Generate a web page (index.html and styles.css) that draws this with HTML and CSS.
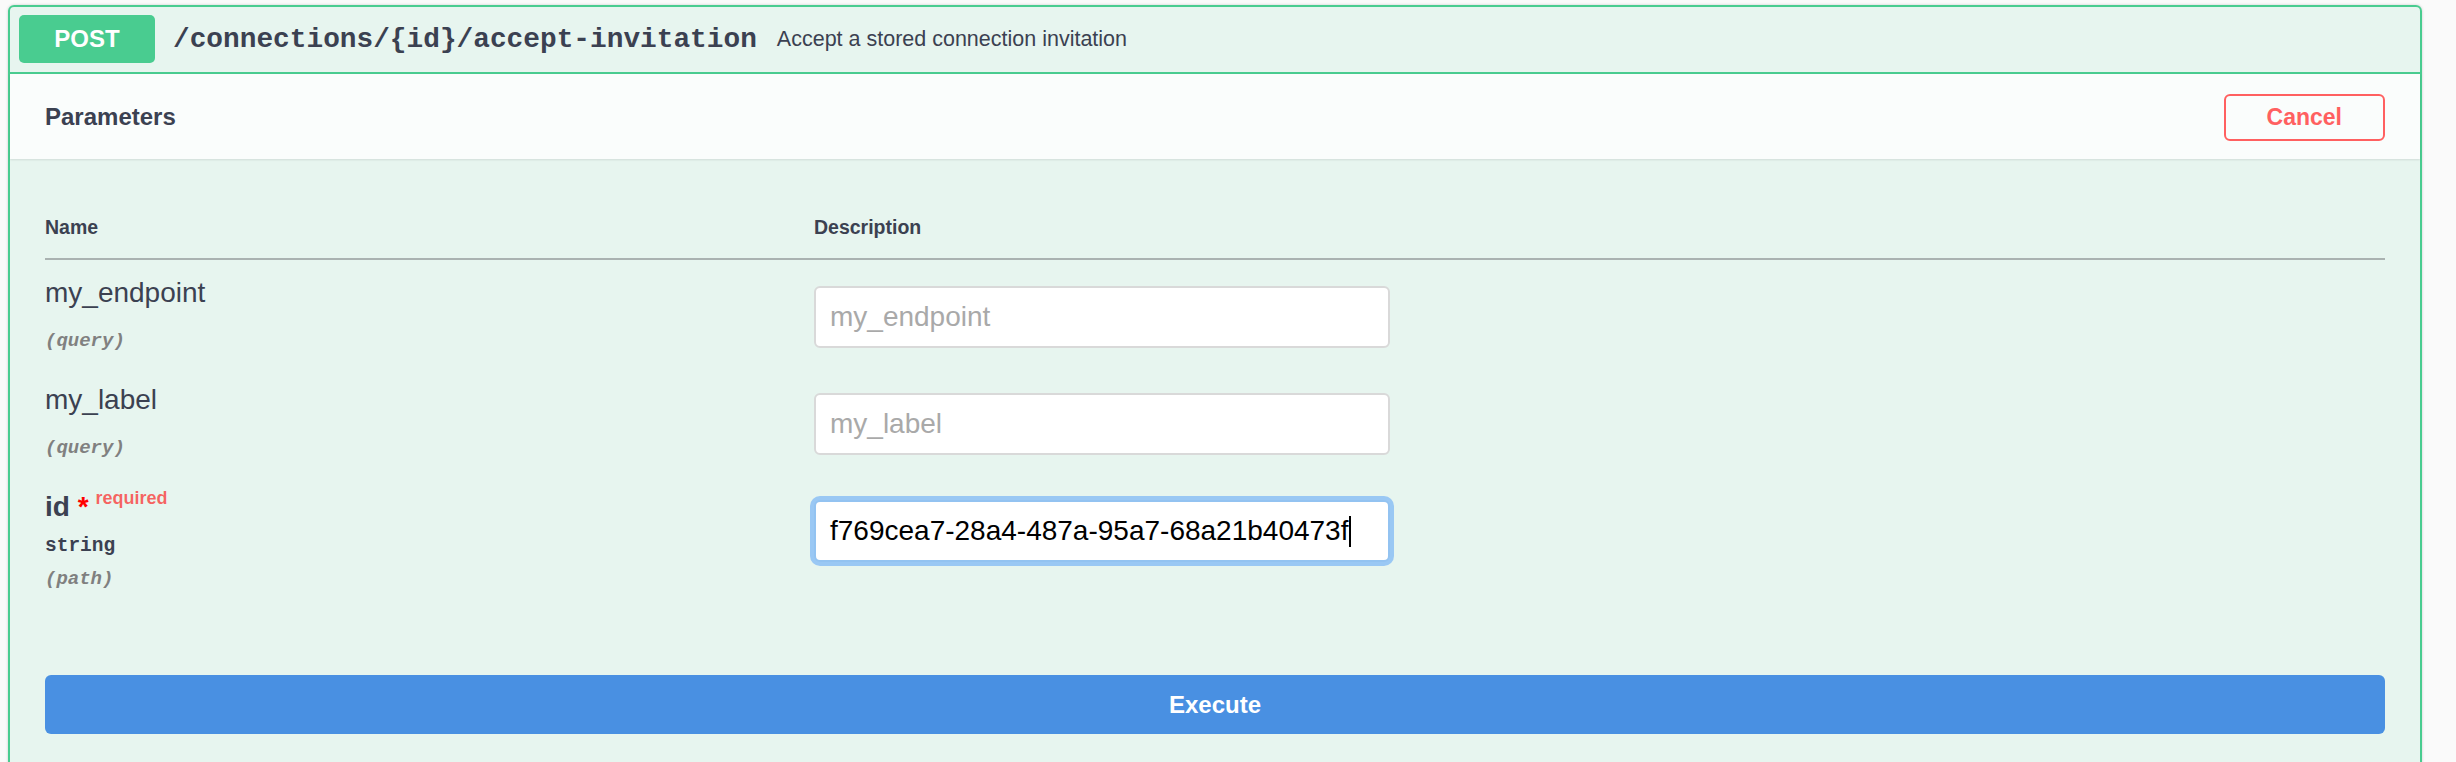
FILE: index.html
```html
<!DOCTYPE html>
<html lang="en">
<head>
<meta charset="utf-8">
<title>POST /connections/{id}/accept-invitation</title>
<link rel="stylesheet" href="styles.css">
</head>
<body>
<div class="opblock">
  <div class="opblock-summary">
    <span class="method">POST</span>
    <span class="path">/connections/{id}/accept-invitation</span>
    <span class="summary">Accept a stored connection invitation</span>
  </div>
  <div class="section-header">
    <h4 class="section-title">Parameters</h4>
    <button class="btn-cancel" type="button">Cancel</button>
  </div>
  <div class="params">
    <div class="param-head">
      <div>Name</div>
      <div>Description</div>
    </div>
    <div class="param-row">
      <div class="name-cell">
        <div class="pname">my_endpoint</div>
        <div class="pin">(query)</div>
      </div>
      <div class="input-cell">
        <input class="text-input" type="text" placeholder="my_endpoint">
      </div>
    </div>
    <div class="param-row">
      <div class="name-cell">
        <div class="pname">my_label</div>
        <div class="pin">(query)</div>
      </div>
      <div class="input-cell">
        <input class="text-input" type="text" placeholder="my_label">
      </div>
    </div>
    <div class="param-row">
      <div class="name-cell">
        <div class="pname required">id<span class="star">&nbsp;*</span><span class="req">required</span></div>
        <div class="ptype">string</div>
        <div class="pin pin-path">(path)</div>
      </div>
      <div class="input-cell">
        <div class="text-input focused"><span class="value">f769cea7-28a4-487a-95a7-68a21b40473f</span><span class="caret"></span></div>
      </div>
    </div>
    <button class="btn-execute" type="button">Execute</button>
  </div>
</div>
</body>
</html>
```

FILE: styles.css
```css
html, body {
  margin: 0;
  padding: 0;
}
body {
  background: #fafafa;
  font-family: "Liberation Sans", Arial, Helvetica, sans-serif;
  color: #3b4151;
  overflow: hidden;
}
.opblock {
  box-sizing: border-box;
  width: 2414px;
  margin: 5px 0 0 8px;
  border: 2px solid #49cc90;
  border-radius: 6px;
  background: rgba(73, 204, 144, 0.1);
  box-shadow: 0 0 3px rgba(0, 0, 0, 0.19);
  padding-bottom: 80px;
}
.opblock-summary {
  display: flex;
  align-items: center;
  padding: 8px 9px 9px;
  border-bottom: 2px solid #49cc90;
}
.method {
  width: 136px;
  height: 48px;
  display: flex;
  align-items: center;
  justify-content: center;
  background: #49cc90;
  color: #fff;
  font-weight: bold;
  font-size: 24px;
  border-radius: 5px;
}
.path {
  margin-left: 18px;
  font-family: "Liberation Mono", "Courier New", monospace;
  font-weight: bold;
  font-size: 27.8px;
  color: #3b4151;
}
.summary {
  margin-left: 20px;
  font-size: 21.5px;
  color: #3b4151;
}
.section-header {
  display: flex;
  align-items: center;
  justify-content: space-between;
  height: 85px;
  padding: 0 35px;
  background: rgba(255, 255, 255, 0.8);
  box-shadow: 0 1px 2px rgba(0, 0, 0, 0.1);
}
.section-title {
  margin: 0;
  font-size: 24px;
  font-weight: bold;
  color: #3b4151;
}
.btn-cancel {
  box-sizing: border-box;
  height: 47px;
  padding: 0 41px;
  margin-top: 1px;
  background: transparent;
  border: 2px solid #ff6060;
  border-radius: 6px;
  color: #ff6060;
  font-family: "Liberation Sans", Arial, Helvetica, sans-serif;
  font-size: 23px;
  font-weight: bold;
}
.params {
  padding: 56px 35px 0;
}
.param-head {
  display: grid;
  grid-template-columns: 769px 1fr;
  font-size: 19.5px;
  font-weight: bold;
  line-height: 24px;
  padding-bottom: 19px;
  border-bottom: 2px solid #aab2b1;
}
.param-row {
  display: grid;
  grid-template-columns: 769px 576px;
  align-items: start;
}
.name-cell {
  padding-top: 17px;
}
.pname {
  font-size: 28px;
  line-height: 32px;
  color: #3b4151;
}
.pname.required {
  font-weight: bold;
}
.star {
  color: #ff0000;
}
.req {
  position: relative;
  top: -12px;
  padding-left: 7px;
  font-size: 18px;
  font-weight: bold;
  color: rgba(255, 0, 0, 0.6);
}
.pin {
  margin-top: 21px;
  font-family: "Liberation Mono", "Courier New", monospace;
  font-style: italic;
  font-weight: bold;
  font-size: 19px;
  line-height: 22px;
  color: #808080;
}
.ptype {
  margin-top: 9px;
  font-family: "Liberation Mono", "Courier New", monospace;
  font-weight: bold;
  font-size: 19.5px;
  line-height: 22px;
  color: #3b4151;
}
.pin-path {
  margin-top: 11px;
}
.input-cell {
  padding: 26px 0 19px;
}
.text-input {
  box-sizing: border-box;
  display: block;
  width: 576px;
  height: 62px;
  margin: 0;
  padding: 0 14px;
  border: 2px solid #d9d9d9;
  border-radius: 6px;
  background: #fff;
  font-family: "Liberation Sans", Arial, Helvetica, sans-serif;
  font-size: 28px;
  color: #000;
  outline: none;
}
.text-input::placeholder {
  color: #a9a9a9;
}
.focused {
  display: flex;
  align-items: center;
  border-color: #93c3f1;
  box-shadow: 0 0 0 4px #9ac8f4;
}
.value {
  white-space: nowrap;
}
.caret {
  display: inline-block;
  width: 2px;
  height: 31px;
  margin-left: 1px;
  background: #000;
}
.btn-execute {
  display: block;
  width: 100%;
  height: 59px;
  margin-top: 85px;
  border: none;
  border-radius: 6px;
  background: #4990e2;
  color: #fff;
  font-family: "Liberation Sans", Arial, Helvetica, sans-serif;
  font-size: 24px;
  font-weight: bold;
}
```
